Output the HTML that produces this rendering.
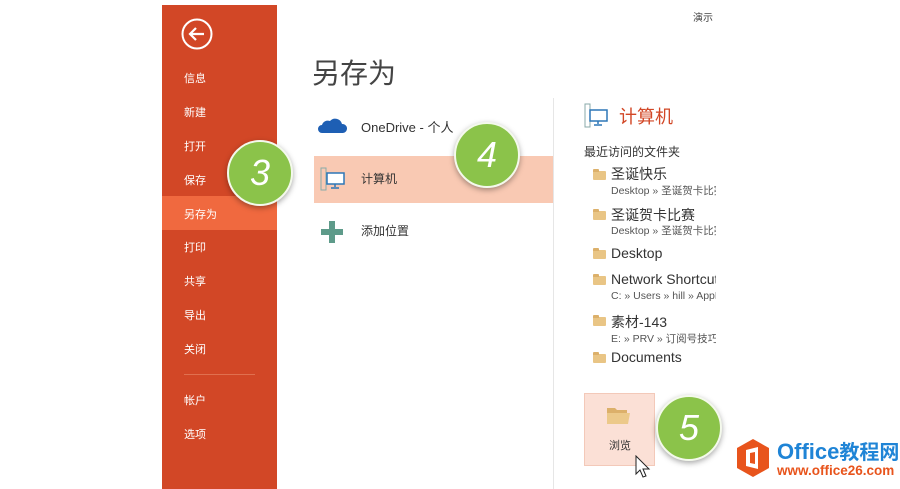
<!DOCTYPE html>
<html><head><meta charset="utf-8"><style>
*{margin:0;padding:0;box-sizing:border-box}
body{width:900px;height:489px;background:#fff;position:relative;overflow:hidden;font-family:"Liberation Sans","Noto Sans CJK SC",sans-serif;color:#333}
.a{position:absolute;white-space:nowrap}
#side{position:absolute;left:162px;top:5px;width:115px;height:484px;background:#d24726}
.m{position:absolute;left:184px;color:#fff;font-size:11px}
.sel{position:absolute;left:162px;top:196px;width:115px;height:34px;background:#f0693f}
.circ{position:absolute;border-radius:50%;background:#8bc34a;border:2px solid #f4f9ec;box-shadow:0 2px 6px rgba(0,0,0,.35);color:#fff;font-size:36px;text-align:center;font-style:italic;font-weight:300}
.fold{position:absolute;width:13px;height:9px;background:#e9c585;border-radius:1px}
.fold:before{content:"";position:absolute;left:0;top:-2px;width:6px;height:3px;background:#dcb06a;border-radius:1px 1px 0 0}
.ft{position:absolute;left:611px;font-size:14px;color:#333}
.fs{position:absolute;left:611px;font-size:10.5px;color:#555}
</style></head><body>
<div class="a" style="left:693px;top:9px;font-size:10px;color:#444;width:24px;overflow:hidden">演示</div>
<div id="side"></div>
<div class="sel"></div>
<svg class="a" style="left:181px;top:18px" width="32" height="32" viewBox="0 0 32 32"><circle cx="16" cy="16" r="14.5" fill="none" stroke="#fff" stroke-width="2"/><path d="M23 16H10M15 10l-6 6 6 6" fill="none" stroke="#fff" stroke-width="2.2"/></svg>
<div class="m" style="top:70px">信息</div>
<div class="m" style="top:104px">新建</div>
<div class="m" style="top:138px">打开</div>
<div class="m" style="top:172px">保存</div>
<div class="m" style="top:206px">另存为</div>
<div class="m" style="top:239px">打印</div>
<div class="m" style="top:273px">共享</div>
<div class="m" style="top:307px">导出</div>
<div class="m" style="top:341px">关闭</div>
<div class="a" style="left:184px;top:374px;width:71px;height:1px;background:#e0704f"></div>
<div class="m" style="top:392px">帐户</div>
<div class="m" style="top:426px">选项</div>

<div class="a" style="left:312px;top:52px;font-size:28px;color:#444">另存为</div>
<div class="a" style="left:553px;top:98px;width:1px;height:391px;background:#e6e6e6"></div>
<svg class="a" style="left:318px;top:116px" width="30" height="18" viewBox="0 0 30 18"><path d="M4 17a4 4 0 0 1 0-8 6 6 0 0 1 8-4 7 7 0 0 1 12 3 4.5 4.5 0 0 1 1 9z" fill="#1e5fb4"/></svg>
<div class="a" style="left:361px;top:117px;font-size:13px;color:#333">OneDrive - 个人</div>
<div class="a" style="left:314px;top:156px;width:239px;height:47px;background:#f9c9b3"></div>
<svg class="a" style="left:320px;top:166px" width="26" height="26" viewBox="0 0 26 26"><path d="M1 2h5v22H1z" fill="none" stroke="#8aa" stroke-width="1"/><rect x="7" y="7" width="17" height="11" fill="#fff" stroke="#2d77b7" stroke-width="1.5"/><path d="M15 18v3M11 22h8" stroke="#2d77b7" stroke-width="1.5"/></svg>
<div class="a" style="left:361px;top:170px;font-size:12px;color:#333">计算机</div>
<svg class="a" style="left:321px;top:221px" width="22" height="22" viewBox="0 0 22 22"><path d="M8 0h6v8h8v6h-8v8H8v-8H0V8h8z" fill="#5e9b8a"/></svg>
<div class="a" style="left:361px;top:222px;font-size:12px;color:#333">添加位置</div>

<svg class="a" style="left:584px;top:103px" width="26" height="26" viewBox="0 0 26 26"><path d="M1 1h5v23H1z" fill="none" stroke="#8aa" stroke-width="1"/><rect x="6" y="7" width="17" height="11" fill="#fff" stroke="#2d77b7" stroke-width="1.5"/><path d="M14 18v3M10 22h8" stroke="#2d77b7" stroke-width="1.5"/></svg>
<div class="a" style="left:619px;top:103px;font-size:18px;color:#d24726">计算机</div>
<div class="a" style="left:584px;top:143px;font-size:12px;color:#333">最近访问的文件夹</div>
<div style="position:absolute;left:0;top:0;width:716px;height:489px;overflow:hidden">
<div class="fold" style="left:593px;top:171px"></div><div class="ft a" style="top:164px">圣诞快乐</div><div class="fs a" style="top:183px">Desktop » 圣诞贺卡比赛</div>
<div class="fold" style="left:593px;top:211px"></div><div class="ft a" style="top:205px">圣诞贺卡比赛</div><div class="fs a" style="top:223px">Desktop » 圣诞贺卡比赛</div>
<div class="fold" style="left:593px;top:250px"></div><div class="ft a" style="top:245px">Desktop</div>
<div class="fold" style="left:593px;top:276px"></div><div class="ft a" style="top:271px">Network Shortcuts</div><div class="fs a" style="top:290px">C: » Users » hill » AppData</div>
<div class="fold" style="left:593px;top:317px"></div><div class="ft a" style="top:312px">素材-143</div><div class="fs a" style="top:331px">E: » PRV » 订阅号技巧</div>
<div class="fold" style="left:593px;top:354px"></div><div class="ft a" style="top:349px">Documents</div>
</div>
<div class="a" style="left:584px;top:393px;width:71px;height:73px;background:#fbe0d6;border:1px solid #f3c9b9"></div>
<svg class="a" style="left:606px;top:406px" width="25" height="19" viewBox="0 0 25 19"><path d="M1 2h8l2 2h10v3H1z" fill="#dcb06a"/><path d="M1 7h23l-2 11H1z" fill="#ecc98a"/></svg>
<div class="a" style="left:609px;top:437px;font-size:11px;color:#333">浏览</div>
<svg class="a" style="left:635px;top:455px" width="16" height="24" viewBox="0 0 16 24"><path d="M1 1v18l4-4 3 7 3-1-3-7h6z" fill="#fff" stroke="#222" stroke-width="1"/></svg>

<div class="circ" style="left:227px;top:140px;width:66px;height:66px;line-height:62px">3</div>
<div class="circ" style="left:454px;top:122px;width:66px;height:66px;line-height:62px">4</div>
<div class="circ" style="left:656px;top:395px;width:66px;height:66px;line-height:62px">5</div>

<svg class="a" style="left:735px;top:438px" width="36" height="40" viewBox="0 0 36 40"><path d="M18 1l16 9v20l-16 9-16-9V10z" fill="#e8541c"/><path d="M11 12l12-3v22l-12-3z" fill="#fff"/><path d="M15 15l5-1v12l-5-1z" fill="#e8541c"/></svg>
<div class="a" style="left:777px;top:436px;font-size:22px;font-weight:bold;color:#1f84d6">Office<span style="font-size:20px">教程网</span></div>
<div class="a" style="left:777px;top:463px;font-size:13.5px;font-weight:bold;color:#e8541c">www.office26.com</div>
</body></html>
